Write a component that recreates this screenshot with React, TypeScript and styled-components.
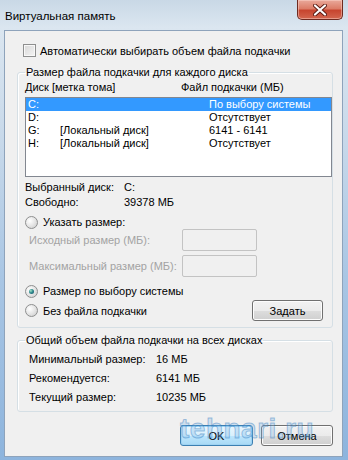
import styled, { createGlobalStyle, css } from "styled-components";

const GlobalStyle = createGlobalStyle`
  html, body {
    margin: 0;
    padding: 0;
  }
  body {
    width: 348px;
    height: 460px;
    overflow: hidden;
    font-family: "Liberation Sans", Arial, sans-serif;
    font-size: 11px;
    white-space: nowrap;
    color: #000;
  }
`;

const Frame = styled.div`
  position: relative;
  width: 348px;
  height: 460px;
  box-sizing: border-box;
  padding: 0 5px 3px 4px;
  display: flex;
  flex-direction: column;
  background: linear-gradient(180deg, #c9d8e6 0%, #dbe6f0 6%, #c8d9ea 30%, #a9c6e4 60%, #8db4dd 100%);
`;

const TitleBar = styled.div`
  height: 30px;
  display: flex;
  justify-content: space-between;
  align-items: flex-start;
`;

const Title = styled.div`
  padding: 8px 0 0 1px;
  line-height: 16px;
  font-size: 11.5px;
  color: #000;
`;

const CloseButton = styled.div`
  width: 46px;
  height: 20px;
  box-sizing: border-box;
  border: 1px solid #6e2a20;
  border-top: none;
  border-radius: 0 0 5px 5px;
  display: flex;
  align-items: center;
  justify-content: center;
  background: linear-gradient(180deg, #e9a99b 0%, #dc7d68 45%, #c7452f 55%, #d3664f 100%);
  box-shadow: inset 0 0 0 1px rgba(255, 220, 210, 0.45);
`;

const Client = styled.div`
  flex: 1;
  display: flex;
  flex-direction: column;
  background: #f0f0f0;
  border: 1px solid #8ea3bb;
  padding: 12px 9px 10px 12px;
`;

const CheckRow = styled.label`
  display: flex;
  align-items: center;
  gap: 4px;
  height: 15px;
  margin-left: 6px;
`;

const CheckBox = styled.span`
  width: 11px;
  height: 11px;
  border: 1px solid #8e8f8f;
  background: linear-gradient(135deg, #d8d8d8 0%, #f4f4f4 100%);
  box-shadow: inset 0 0 0 1px #f8f8f8;
`;

const Group = styled.fieldset<{ $gap?: number }>`
  margin: ${p => p.$gap ?? 0}px 0 0;
  padding: 0 0 6px 7px;
  border: 1px solid #d5dfe5;
  border-radius: 3px;
  box-shadow: inset 1px 1px 0 #fff;
  min-inline-size: 0;
`;

const Legend = styled.legend`
  padding: 0 1px;
  line-height: 16px;
  font-size: 11px;
`;

const HeaderRow = styled.div`
  display: grid;
  grid-template-columns: 156px 1fr;
  line-height: 15px;
`;

const ListBox = styled.div`
  margin-top: 2px;
  height: 80px;
  box-sizing: border-box;
  border: 1px solid #828790;
  background: #fff;
`;

const ListRow = styled.div<{ $selected?: boolean }>`
  display: grid;
  grid-template-columns: 32px 149px 1fr;
  height: 13px;
  line-height: 13px;
  padding-left: 2px;
  ${p =>
    p.$selected &&
    css`
      background: #3399ff;
      color: #fff;
    `}
`;

const InfoGrid = styled.div<{ $label: number; $indent?: number; $gap?: number; $top?: number }>`
  display: grid;
  grid-template-columns: ${p => p.$label}px 1fr;
  row-gap: ${p => p.$gap ?? 0}px;
  line-height: 15px;
  padding-left: ${p => p.$indent ?? 0}px;
  margin-top: ${p => p.$top ?? 0}px;
`;

const RadioRow = styled.label<{ $top: number }>`
  display: flex;
  align-items: center;
  gap: 5px;
  height: 14px;
  margin-top: ${p => p.$top}px;
`;

const Radio = styled.span<{ $checked?: boolean }>`
  position: relative;
  width: 11px;
  height: 11px;
  border-radius: 50%;
  border: 1px solid #8e8f8f;
  background: radial-gradient(circle at 35% 35%, #ffffff 0%, #e8e8e8 45%, #c9c9c9 100%);
  ${p =>
    p.$checked &&
    css`
      &::after {
        content: "";
        position: absolute;
        left: 3px;
        top: 3px;
        width: 5px;
        height: 5px;
        border-radius: 50%;
        background: radial-gradient(circle at 35% 35%, #a9e4c8 0%, #2f8a8e 45%, #164f66 100%);
      }
    `}
`;

const SizeRow = styled.div<{ $top: number }>`
  display: grid;
  grid-template-columns: 153px 75px;
  align-items: center;
  padding-left: 4px;
  margin-top: ${p => p.$top}px;
  color: #a3a3a3;
`;

const SizeInput = styled.div`
  height: 22px;
  box-sizing: border-box;
  border: 1px solid #c3c3c3;
  border-radius: 2px;
  background: #f0f0f0;
`;

const LastRow = styled.div`
  display: flex;
  align-items: center;
  justify-content: space-between;
  height: 21px;
  margin-top: 2px;
  padding-right: 9px;
`;

const Button = styled.div<{ $default?: boolean; $width: number }>`
  width: ${p => p.$width}px;
  height: 21px;
  box-sizing: border-box;
  display: flex;
  align-items: center;
  justify-content: center;
  border-radius: 3px;
  border: 1px solid #707070;
  background: linear-gradient(180deg, #f2f2f2 0%, #ebebeb 50%, #dddddd 51%, #cfcfcf 100%);
  box-shadow: inset 0 0 0 1px #fcfcfc;
  ${p =>
    p.$default &&
    css`
      border-color: #3c7fb1;
      background: linear-gradient(180deg, #eaf6fd 0%, #d9f0fc 50%, #bee6fd 51%, #a7d9f5 100%);
      box-shadow: inset 0 0 0 1px #9ed3f3;
    `}
`;

const ButtonBar = styled.div`
  margin-top: auto;
  display: flex;
  justify-content: flex-end;
  gap: 8px;
`;

const Watermark = styled.div`
  position: absolute;
  left: 180px;
  top: 413px;
  font-family: "Liberation Sans", Arial, sans-serif;
  font-size: 28px;
  font-weight: bold;
  letter-spacing: 0.5px;
  color: rgba(120, 180, 230, 0.3);
  -webkit-text-stroke: 1px rgba(40, 115, 185, 0.4);
  pointer-events: none;
`;

const drives = [
  { letter: "C:", label: "", size: "По выбору системы", selected: true },
  { letter: "D:", label: "", size: "Отсутствует" },
  { letter: "G:", label: "[Локальный диск]", size: "6141 - 6141" },
  { letter: "H:", label: "[Локальный диск]", size: "Отсутствует" },
];

export default function App() {
  return (
    <>
      <GlobalStyle />
      <Frame>
        <TitleBar>
          <Title>Виртуальная память</Title>
          <CloseButton>
            <svg width="14" height="12" viewBox="0 0 14 12">
              <path
                d="M2 1.5 L12 10.5 M12 1.5 L2 10.5"
                stroke="#5a1a12"
                strokeWidth="4"
                strokeLinecap="round"
              />
              <path
                d="M2 1.5 L12 10.5 M12 1.5 L2 10.5"
                stroke="#fff"
                strokeWidth="2.2"
                strokeLinecap="round"
              />
            </svg>
          </CloseButton>
        </TitleBar>
        <Client>
          <CheckRow>
            <CheckBox />
            Автоматически выбирать объем файла подкачки
          </CheckRow>

          <Group $gap={6}>
            <Legend>Размер файла подкачки для каждого диска</Legend>
            <HeaderRow>
              <span>Диск [метка тома]</span>
              <span>Файл подкачки (МБ)</span>
            </HeaderRow>
            <ListBox>
              {drives.map(d => (
                <ListRow key={d.letter} $selected={d.selected}>
                  <span>{d.letter}</span>
                  <span>{d.label}</span>
                  <span>{d.size}</span>
                </ListRow>
              ))}
            </ListBox>
            <InfoGrid $label={99} $top={3}>
              <span>Выбранный диск:</span>
              <span>C:</span>
              <span>Свободно:</span>
              <span>39378 МБ</span>
            </InfoGrid>
            <RadioRow $top={5}>
              <Radio />
              Указать размер:
            </RadioRow>
            <SizeRow $top={0}>
              <span>Исходный размер (МБ):</span>
              <SizeInput />
            </SizeRow>
            <SizeRow $top={4}>
              <span>Максимальный размер (МБ):</span>
              <SizeInput />
            </SizeRow>
            <RadioRow $top={7}>
              <Radio $checked />
              Размер по выбору системы
            </RadioRow>
            <LastRow>
              <RadioRow $top={0}>
                <Radio />
                Без файла подкачки
              </RadioRow>
              <Button $width={71}>Задать</Button>
            </LastRow>
          </Group>

          <Group $gap={4}>
            <Legend>Общий объем файла подкачки на всех дисках</Legend>
            <InfoGrid $label={127} $indent={4} $gap={4} $top={4}>
              <span>Минимальный размер:</span>
              <span>16 МБ</span>
              <span>Рекомендуется:</span>
              <span>6141 МБ</span>
              <span>Текущий размер:</span>
              <span>10235 МБ</span>
            </InfoGrid>
          </Group>

          <ButtonBar>
            <Button $default $width={73}>OK</Button>
            <Button $width={72}>Отмена</Button>
          </ButtonBar>
        </Client>
        <Watermark>tehnari.ru</Watermark>
      </Frame>
    </>
  );
}
